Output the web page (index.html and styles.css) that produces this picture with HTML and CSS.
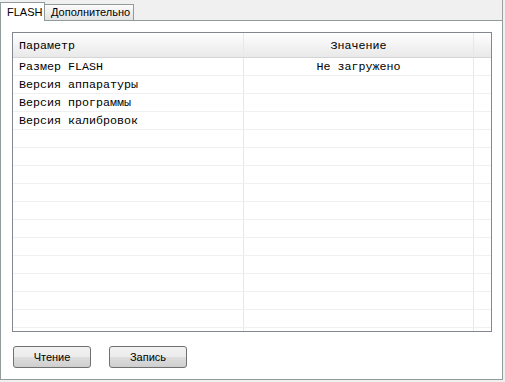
FILE: index.html
```html
<!DOCTYPE html>
<html lang="ru">
<head>
    <meta charset="UTF-8">
    <title>FLASH</title>
    <link rel="stylesheet" href="styles.css">
</head>
<body>
    <div class="tabs">
        <div class="tab active">FLASH</div>
        <div class="tab">Дополнительно</div>
    </div>
    <div class="panel">
        <div class="grid">
            <div class="row head">
                <div class="cell name">Параметр</div>
                <div class="cell value">Значение</div>
                <div class="cell filler"></div>
            </div>
            <div class="row">
                <div class="cell name">Размер FLASH</div>
                <div class="cell value">Не загружено</div>
                <div class="cell filler"></div>
            </div>
            <div class="row">
                <div class="cell name">Версия аппаратуры</div>
                <div class="cell value"></div>
                <div class="cell filler"></div>
            </div>
            <div class="row">
                <div class="cell name">Версия программы</div>
                <div class="cell value"></div>
                <div class="cell filler"></div>
            </div>
            <div class="row">
                <div class="cell name">Версия калибровок</div>
                <div class="cell value"></div>
                <div class="cell filler"></div>
            </div>
            <div class="row"><div class="cell name"></div><div class="cell value"></div><div class="cell filler"></div></div>
            <div class="row"><div class="cell name"></div><div class="cell value"></div><div class="cell filler"></div></div>
            <div class="row"><div class="cell name"></div><div class="cell value"></div><div class="cell filler"></div></div>
            <div class="row"><div class="cell name"></div><div class="cell value"></div><div class="cell filler"></div></div>
            <div class="row"><div class="cell name"></div><div class="cell value"></div><div class="cell filler"></div></div>
            <div class="row"><div class="cell name"></div><div class="cell value"></div><div class="cell filler"></div></div>
            <div class="row"><div class="cell name"></div><div class="cell value"></div><div class="cell filler"></div></div>
            <div class="row"><div class="cell name"></div><div class="cell value"></div><div class="cell filler"></div></div>
            <div class="row"><div class="cell name"></div><div class="cell value"></div><div class="cell filler"></div></div>
            <div class="row"><div class="cell name"></div><div class="cell value"></div><div class="cell filler"></div></div>
            <div class="row"><div class="cell name"></div><div class="cell value"></div><div class="cell filler"></div></div>
            <div class="row"><div class="cell name"></div><div class="cell value"></div><div class="cell filler"></div></div>
        </div>
        <div class="buttons">
            <button class="btn">Чтение</button>
            <button class="btn">Запись</button>
        </div>
    </div>
</body>
</html>
```
FILE: styles.css
```css
body {
    margin: 0;
    background-color: #f0f0f0;
    font-family: "Liberation Sans", Arial, sans-serif;
    font-size: 11px;
    color: #000;
}
.tabs {
    display: flex;
    align-items: flex-end;
    height: 20px;
    width: 503px;
    box-sizing: border-box;
    border-right: 1px solid #a0a0a0;
}
.tab {
    height: 16px;
    line-height: 15px;
    padding: 0 3px 0 6px;
    border: 1px solid #919b9c;
    border-bottom: none;
    border-left: none;
    background: linear-gradient(#fbfbfb, #e3e3e3);
    box-sizing: border-box;
}
.tab.active {
    height: 19px;
    line-height: 18px;
    padding: 0 0 0 6px;
    border-left: 1px solid #919b9c;
    background-color: #fff;
    background-image: none;
    margin-bottom: -1px;
    position: relative;
    width: 45px;
}
.panel {
    width: 503px;
    height: 360px;
    box-sizing: border-box;
    border: 1px solid #919b9c;
    background-color: #fff;
    padding: 11px 10px 0 11px;
}
.grid {
    height: 300px;
    box-sizing: border-box;
    border: 1px solid #828790;
    overflow: hidden;
    font-family: "Liberation Mono", "Courier New", monospace;
    font-size: 11.67px;
}
.row {
    display: flex;
    height: 18px;
    box-sizing: border-box;
    border-bottom: 1px solid #f0f0f0;
}
.row.head {
    height: 25px;
    border-bottom: 1px solid #d5d5d5;
    background: linear-gradient(#ffffff, #f3f3f3 50%, #e9e9e9);
}
.cell {
    box-sizing: border-box;
    line-height: 19px;
    white-space: nowrap;
}
.head .cell {
    line-height: 26px;
}
.name {
    width: 231px;
    padding-left: 6px;
    border-right: 1px solid #e8e8e8;
}
.value {
    width: 230px;
    text-align: center;
    border-right: 1px solid #e8e8e8;
}
.filler {
    flex: 1;
}
.buttons {
    display: flex;
    gap: 18px;
    margin-top: 14px;
    padding-left: 1px;
}
.btn {
    width: 78px;
    height: 22px;
    padding: 0;
    font-family: "Liberation Sans", Arial, sans-serif;
    font-size: 11px;
    color: #000;
    border: 1px solid #707070;
    border-radius: 3px;
    background: linear-gradient(#f2f2f2, #ebebeb 50%, #dddddd 51%, #cfcfcf);
}
```
